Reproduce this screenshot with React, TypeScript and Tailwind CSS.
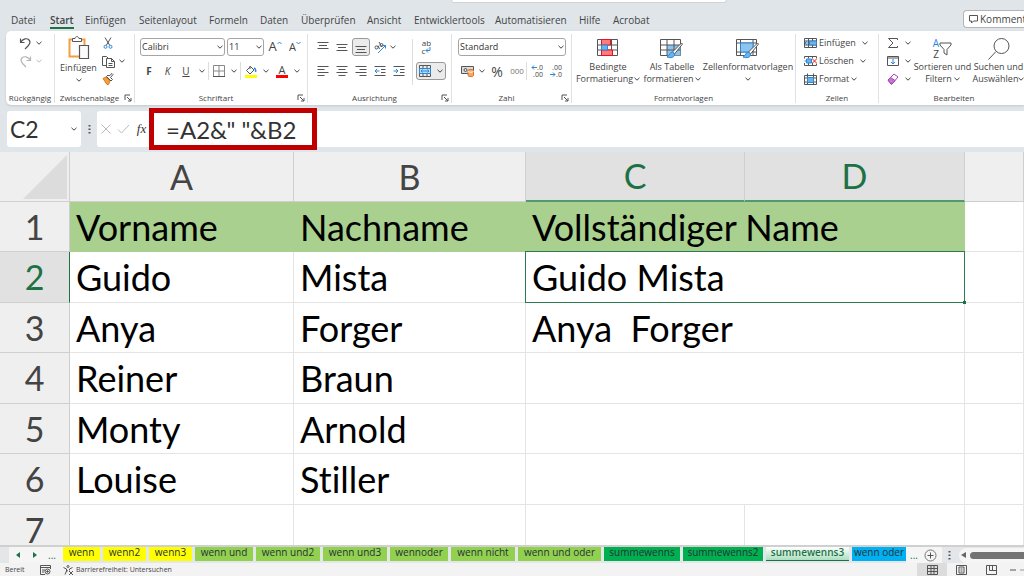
import type { ReactNode } from "react";
import clsx from "clsx";

const MENU = [
  { label: "Datei", width: "w-[39px]" },
  { label: "Start", width: "w-[35px]" },
  { label: "Einfügen", width: "w-[54px]" },
  { label: "Seitenlayout", width: "w-[70px]" },
  { label: "Formeln", width: "w-[51px]" },
  { label: "Daten", width: "w-[41px]" },
  { label: "Überprüfen", width: "w-[66px]" },
  { label: "Ansicht", width: "w-[47px]" },
  { label: "Entwicklertools", width: "w-[81px]" },
  { label: "Automatisieren", width: "w-[84px]" },
  { label: "Hilfe", width: "w-[34px]" },
  { label: "Acrobat", width: "w-[50px]" },
];

const ROWS = [
  { a: "Vorname", b: "Nachname", c: "Vollständiger Name" },
  { a: "Guido", b: "Mista", c: "Guido Mista" },
  { a: "Anya", b: "Forger", c: "Anya  Forger" },
  { a: "Reiner", b: "Braun", c: "" },
  { a: "Monty", b: "Arnold", c: "" },
  { a: "Louise", b: "Stiller", c: "" },
];

const SHEETS = [
  { label: "wenn", style: "w-[37px] bg-[#ffff00]" },
  { label: "wenn2", style: "w-[43px] bg-[#ffff00]" },
  { label: "wenn3", style: "w-[43px] bg-[#ffff00]" },
  { label: "wenn und", style: "w-[58px] bg-[#92d050]" },
  { label: "wenn und2", style: "w-[64px] bg-[#92d050]" },
  { label: "wenn und3", style: "w-[64px] bg-[#92d050]" },
  { label: "wennoder", style: "w-[58px] bg-[#92d050]" },
  { label: "wenn nicht", style: "w-[64px] bg-[#92d050]" },
  { label: "wenn und oder", style: "w-[83px] bg-[#92d050]" },
  { label: "summewenns", style: "w-[76px] bg-[#00b050]" },
  { label: "summewenns2", style: "w-[80px] bg-[#00b050]" },
  {
    label: "summewenns3",
    style:
      "w-[83px] border-b border-[#1e7145] bg-linear-to-b from-white to-[#a9dfc0] font-semibold !text-[#1e7145]",
  },
  { label: "wenn oder", style: "w-[54px] bg-[#00b0f0]" },
];

type IconProps = { w: number; h: number; children: ReactNode };

const Icon = ({ w, h, children }: IconProps) => (
  <svg
    width={w}
    height={h}
    viewBox={`0 0 ${w} ${h}`}
    fill="none"
    stroke="#555"
    strokeWidth="1"
    className="shrink-0"
    aria-hidden="true"
  >
    {children}
  </svg>
);

const Chevron = ({ faded = false }: { faded?: boolean }) => (
  <Icon w={6} h={4}>
    <path d="M.5 .8 3 3.200 5.500 .8" stroke={faded ? "#bbb" : "#444"} />
  </Icon>
);

type ToolProps = {
  label: string;
  className?: string;
  children: ReactNode;
};

const Tool = ({ label, className, children }: ToolProps) => (
  <button
    type="button"
    aria-label={label}
    className={clsx("flex h-[18px] shrink-0 items-center justify-center", className)}
  >
    {children}
  </button>
);

const Launcher = () => (
  <Icon w={8} h={8}>
    <path d="M1 6V1h5M3 3l4 4M7 4v3H4" />
  </Icon>
);

type GroupProps = {
  label: string;
  className: string;
  launcher?: boolean;
  children: ReactNode;
};

const Group = ({ label, className, launcher, children }: GroupProps) => (
  <section
    aria-label={label}
    className={clsx("flex shrink-0 flex-col border-r border-[#e1e1e1]", className)}
  >
    <div className="flex flex-1">{children}</div>
    <div className="flex h-[10px] items-center text-[8px] leading-[10px] text-[#444]">
      <span className="flex-1 text-center whitespace-nowrap">{label}</span>
      {launcher && (
        <button type="button" aria-label={`${label} Optionen`} className="pr-0.5">
          <Launcher />
        </button>
      )}
    </div>
  </section>
);

type DropdownProps = { label: string; value: string; className: string };

const Dropdown = ({ label, value, className }: DropdownProps) => (
  <div className={clsx("relative h-[18px] shrink-0", className)}>
    <select
      aria-label={label}
      className="block h-full w-full appearance-none rounded-[3px] border border-[#a5a5a5] bg-white pl-px text-[9px] text-[#333]"
    >
      <option>{value}</option>
    </select>
    <span className="pointer-events-none absolute inset-y-0 right-0.5 flex items-center">
      <Chevron />
    </span>
  </div>
);

const Lines = ({ d }: { d: string }) => (
  <Icon w={12} h={12}>
    <path d={d} />
  </Icon>
);

const Divider = () => <span className="h-[18px] w-px shrink-0 bg-[#ddd]" />;

const UndoGroup = () => (
  <Group label="Rückgängig" className="w-[49px]">
    <div className="flex flex-col pl-3">
      <div className="flex">
        <Tool label="Rückgängig" className="w-[15px]">
          <Icon w={13} h={13}>
            <path d="M1.5 1.5v4h4M1.5 5.5C4 1.5 8 .8 10 3s1 4-1 6l-3 3" strokeWidth="1.2" />
          </Icon>
        </Tool>
        <Tool label="Rückgängig Liste" className="w-[12px]">
          <Chevron />
        </Tool>
      </div>
      <div className="flex">
        <Tool label="Wiederholen" className="w-[15px]">
          <Icon w={13} h={13}>
            <path
              d="M11.5 1.5v4h-4M11.5 5.5C9 1.5 5 .8 3 3s-1 4 1 6l3 3"
              stroke="#b5b5b5"
              strokeWidth="1.2"
            />
          </Icon>
        </Tool>
        <Tool label="Wiederholen Liste" className="w-[12px]">
          <Chevron faded />
        </Tool>
      </div>
    </div>
  </Group>
);

const ClipboardGroup = () => (
  <Group label="Zwischenablage" className="w-[80px]" launcher>
    <button
      type="button"
      className="flex w-[47px] flex-col items-center pt-0.5 text-[9px] leading-[12px]"
    >
      <Icon w={22} h={24}>
        <path d="M1.5 3.5h15v17h-15z" stroke="#f0a040" strokeWidth="2" />
        <path d="M3 5h12v14H3z" fill="#fff" stroke="none" />
        <path d="M4.500 5.500v-3h2.500c.5-2.500 3.500-2.500 4 0h2.500v3z" fill="#fff" />
        <path d="M11.500 9.500h9v13h-9z" fill="#fafafa" strokeWidth="1.200" />
      </Icon>
      <span className="mt-0.5">Einfügen</span>
      <span className="flex h-3 items-center">
        <Chevron />
      </span>
    </button>
    <div className="flex flex-col">
      <Tool label="Ausschneiden" className="w-[12px]">
        <Icon w={10} h={12}>
          <path d="M2 .5 6.800 8.500M8 .5 3.200 8.500" />
          <circle cx="2.500" cy="9.800" r="1.500" stroke="#2b88d8" />
          <circle cx="7.500" cy="9.800" r="1.500" stroke="#2b88d8" />
        </Icon>
      </Tool>
      <div className="flex">
        <Tool label="Kopieren" className="w-[13px]">
          <Icon w={13} h={13}>
            <path d="M4.500 10.500h-4V1.500h4l1.500 1.500" />
            <path d="M4.500 3.500h5l3 3v6h-8zM9.500 3.500v3h3M6.500 8.500h4M6.500 10.500h4" />
          </Icon>
        </Tool>
        <Tool label="Kopieren Liste" className="w-[13px]">
          <Chevron />
        </Tool>
      </div>
      <Tool label="Format übertragen" className="w-[12px]">
        <Icon w={12} h={12}>
          <path d="M1 5.500 4 4l4 4-1.500 3.500H5z" fill="#f0a040" stroke="#d97a1c" />
          <path d="m4.500 3.500 4.500 4.500 1.500-1.500-2-2 2.500-3-1-1-3 2.500-1-1z" fill="#fff" />
        </Icon>
      </Tool>
    </div>
  </Group>
);

const FontGroup = () => (
  <Group label="Schriftart" className="w-[173px]" launcher>
    <div className="flex flex-col gap-1.5 pt-1 pl-[5px]">
      <div className="flex gap-0.5">
        <Dropdown label="Schriftart" value="Calibri" className="w-[85px]" />
        <Dropdown label="Schriftgrad" value="11" className="w-[37px]" />
        <Tool label="Schriftgrad vergrößern" className="w-[18px] text-[13px]">
          A
          <span className="self-start pt-0.5">
            <Icon w={5} h={5}>
              <path d="m.5 4 2-2 2 2" stroke="#2b88d8" />
            </Icon>
          </span>
        </Tool>
        <Tool label="Schriftgrad verkleinern" className="w-[18px] text-[11px]">
          A
          <span className="self-start pt-0.5">
            <Icon w={5} h={5}>
              <path d="m.5 2 2 2 2-2" stroke="#2b88d8" />
            </Icon>
          </span>
        </Tool>
      </div>
      <div className="flex text-[10px]">
        <Tool label="Fett" className="w-[18px] font-bold">F</Tool>
        <Tool label="Kursiv" className="w-[19px] italic">K</Tool>
        <Tool label="Unterstrichen" className="w-[18px] underline">U</Tool>
        <Tool label="Unterstrichen Liste" className="w-[13px]"><Chevron /></Tool>
        <Divider />
        <Tool label="Rahmen" className="w-[19px]">
          <Icon w={12} h={12}>
            <path d="M.5.500h11v11H.500zM6 .500v11M.500 6h11" stroke="#888" />
            <path d="M0 11.500h12" />
          </Icon>
        </Tool>
        <Tool label="Rahmen Liste" className="w-[12px]"><Chevron /></Tool>
        <Divider />
        <Tool label="Füllfarbe" className="w-[20px]">
          <Icon w={12} h={13}>
            <path d="M5 1v3M5.500 1.500 9 5 5 9 1.500 5.500z" />
            <path d="M9 3c1.500.5 2 2 1.500 4" stroke="#2b88d8" strokeWidth="1.500" />
            <path d="M0 10h12v3H0z" fill="#ff0" stroke="none" />
          </Icon>
        </Tool>
        <Tool label="Füllfarbe Liste" className="w-[10px]"><Chevron /></Tool>
        <Tool label="Schriftfarbe" className="w-[22px]">
          <span className="flex w-3 flex-col items-center border-b-[3px] border-[#f00] text-[11px] leading-[10px]">
            A
          </span>
        </Tool>
        <Tool label="Schriftfarbe Liste" className="w-[8px]"><Chevron /></Tool>
      </div>
    </div>
  </Group>
);

const AlignmentGroup = () => (
  <Group label="Ausrichtung" className="w-[144px]" launcher>
    <div className="flex flex-col gap-1.5 pt-1 pl-[5px]">
      <div className="flex">
        <Tool label="Oben ausrichten" className="w-[19px]">
          <Lines d="M.500 1.500h11M2 4.500h8M.500 7.500h11" />
        </Tool>
        <Tool label="Zentriert ausrichten" className="w-[20px]">
          <Lines d="M.500 3.500h11M2 6.500h8M.500 9.500h11" />
        </Tool>
        <Tool label="Unten ausrichten" className="w-[18px] rounded-[3px] border border-[#999] bg-[#ebebeb]">
          <Lines d="M.500 5.500h11M2 8.500h8M.500 11.500h11" />
        </Tool>
        <Tool label="Ausrichtung" className="w-[20px]">
          <Icon w={13} h={13}>
            <circle cx="2.500" cy="6.500" r="1.500" />
            <path d="M4 4.500 5.500 8M5 1l3 5" />
            <circle cx="7.500" cy="4" r="1.500" />
            <path d="M4 12 11.500 4.500M8.500 4.500h3v3" stroke="#2b88d8" />
          </Icon>
        </Tool>
        <Tool label="Ausrichtung Liste" className="w-[6px]"><Chevron /></Tool>
      </div>
      <div className="flex">
        <Tool label="Linksbündig" className="w-[19px]">
          <Lines d="M.500 1.500h11M.500 4.500h7M.500 7.500h11M.500 10.500h7" />
        </Tool>
        <Tool label="Zentriert" className="w-[19px]">
          <Lines d="M.500 1.500h11M2.500 4.500h7M.500 7.500h11M2.500 10.500h7" />
        </Tool>
        <Tool label="Rechtsbündig" className="w-[19px]">
          <Lines d="M.500 1.500h11M4.500 4.500h7M.500 7.500h11M4.500 10.500h7" />
        </Tool>
        <Tool label="Einzug verkleinern" className="w-[19px]">
          <Icon w={12} h={12}>
            <path d="M.500 1.500h11M7 4.500h4.500M7 7.500h4.500M.500 10.500h11" />
            <path d="M1 6h4.500M3 4 1 6l2 2" stroke="#2b88d8" />
          </Icon>
        </Tool>
        <Tool label="Einzug vergrößern" className="w-[19px]">
          <Icon w={12} h={12}>
            <path d="M.500 1.500h11M7 4.500h4.500M7 7.500h4.500M.500 10.500h11" />
            <path d="M.500 6H5M3 4l2 2-2 2" stroke="#2b88d8" />
          </Icon>
        </Tool>
      </div>
    </div>
    <div className="mt-[5px] ml-1 h-[46px] w-px bg-[#ddd]" />
    <div className="flex flex-col gap-1.5 pt-1 pl-[3px]">
      <Tool label="Textumbruch" className="w-[21px]">
        <span className="flex flex-col text-[8px] leading-[8px]">
          <span>ab</span>
          <span className="flex">
            c
            <Icon w={6} h={7}>
              <path d="M5 0v3.500H1M3 1.500l-2 2 2 2" stroke="#2b88d8" />
            </Icon>
          </span>
        </span>
      </Tool>
      <Tool label="Verbinden und zentrieren" className="w-[30px] gap-1.5 rounded-[3px] border border-[#999] bg-[#ebebeb]">
        <Icon w={12} h={12}>
          <path d="M.500.500h11v11H.500zM4 .500v3M8 .500v3M4 8.500v3M8 8.500v3" />
          <path d="M.500 3.500h11v5H.500z" fill="#b9dcf5" stroke="#2b88d8" />
          <path d="M2 6h8M3.500 4.500 2 6l1.500 1.500M8.500 4.500 10 6 8.500 7.500" stroke="#2b88d8" />
        </Icon>
        <Chevron />
      </Tool>
    </div>
  </Group>
);

const NumberGroup = () => (
  <Group label="Zahl" className="w-[120px]" launcher>
    <div className="flex flex-col gap-1.5 pt-1 pl-[6px]">
      <Dropdown label="Zahlenformat" value="Standard" className="w-[108px]" />
      <div className="flex">
        <Tool label="Buchhaltungsformat" className="w-[19px]">
          <Icon w={13} h={12}>
            <path d="M.500 1.500h12v7H.500z" fill="#ddd" />
            <circle cx="4.500" cy="5" r="1.500" />
            <path d="M7 5.500c0-1.500 5.500-1.500 5.500 0v5c0 1.500-5.500 1.500-5.500 0z" fill="#f3a869" stroke="#d9731c" />
            <path d="M7 6.500c1 1 4.500 1 5.500 0" stroke="#fff" />
          </Icon>
        </Tool>
        <Tool label="Buchhaltungsformat Liste" className="w-[9px]"><Chevron /></Tool>
        <Tool label="Prozentformat" className="w-[22px] text-[14px]">%</Tool>
        <Tool label="1000er-Trennzeichen" className="w-[18px] text-[8px] text-[#777]">000</Tool>
        <Divider />
        <Tool label="Dezimalstelle hinzufügen" className="w-[20px]">
          <span className="flex flex-col items-end text-[7px] leading-[7px]">
            <span className="flex items-center">
              <Icon w={6} h={5}>
                <path d="M6 2.500H1M3 .500l-2 2 2 2" stroke="#2b88d8" />
              </Icon>
              .0
            </span>
            <span>.00</span>
          </span>
        </Tool>
        <Tool label="Dezimalstelle entfernen" className="w-[18px]">
          <span className="flex flex-col items-end text-[7px] leading-[7px]">
            <span>.00</span>
            <span className="flex items-center">
              <Icon w={6} h={5}>
                <path d="M0 2.500h5M3 .500l2 2-2 2" stroke="#2b88d8" />
              </Icon>
              .0
            </span>
          </span>
        </Tool>
      </div>
    </div>
  </Group>
);

const Brush = () => (
  <>
    <path d="m21.500 5-9 9 2 2 8-10z" fill="#fff" />
    <path d="M12.500 14c-3 0-2.500 3.500-5.500 5 3.500 1.500 8 .5 7.500-3z" fill="#6db3ea" stroke="#2b88d8" />
  </>
);

const StylesGroup = () => (
  <Group label="Formatvorlagen" className="w-[224px]">
    <button type="button" className="ml-1 flex w-[64px] flex-col items-center pt-1 text-[9px] leading-[12px]">
      <Icon w={22} h={22}>
        <path d="M.500 1.500h20v16H.500zM.500 7h20M.500 12h20M4.500 1.500v16M14.500 1.500v16" />
        <path d="M4.500 1.500h9V7h-9zM4.500 12h11v5.500h-11z" fill="#ff7b7b" stroke="#e81123" />
        <path d="M4.500 7h6v5h-6z" fill="#6db3ea" stroke="#2b88d8" />
      </Icon>
      <span className="mt-px">Bedingte</span>
      <span className="flex items-center gap-px whitespace-nowrap">Formatierung <Chevron /></span>
    </button>
    <button type="button" className="flex w-[64px] flex-col items-center pt-1 text-[9px] leading-[12px]">
      <Icon w={24} h={22}>
        <path d="M.500 1.500h20v16H.500z" fill="#fff" />
        <path d="M7 7h13.500v10.500H7z" fill="#8cc6f0" stroke="none" />
        <path d="M.500 7h20M.500 12h20M7 1.500v16M14 1.500v16" />
        <Brush />
      </Icon>
      <span className="mt-px">Als Tabelle</span>
      <span className="flex items-center gap-px whitespace-nowrap">formatieren <Chevron /></span>
    </button>
    <button type="button" className="flex w-[88px] flex-col items-center pt-1 text-[9px] leading-[12px]">
      <Icon w={24} h={22}>
        <path d="M.500 1.500h20v16H.500zM.500 5h20M.500 14h20M4.500 1.500v16M17 1.500v16" />
        <path d="M4.500 5H17v9H4.500z" fill="#8cc6f0" stroke="#2b88d8" />
        <Brush />
      </Icon>
      <span className="mt-px">Zellenformatvorlagen</span>
      <span className="flex h-3 items-center"><Chevron /></span>
    </button>
  </Group>
);

const CellsGroup = () => (
  <Group label="Zellen" className="w-[83px]">
    <div className="flex flex-col pl-[8px] text-[9px]">
      <Tool label="Zellen einfügen" className="gap-0.5 !justify-start">
        <Icon w={13} h={12}>
          <path d="M.500 1.500h12v9H.500zM.500 4h12M.500 8h12M4.500 1.500v9M8.500 1.500v9" />
          <path d="M5.500 4h7v4h-7z" fill="#6db3ea" stroke="#2b88d8" />
          <path d="M6 6H1M3 4 1 6l2 2" stroke="#2b88d8" />
        </Icon>
        Einfügen
        <span className="pl-1"><Chevron /></span>
      </Tool>
      <Tool label="Zellen löschen" className="gap-0.5 !justify-start">
        <Icon w={13} h={12}>
          <path d="M.500 3.500v-2h12v2M4.500 1.500v2M8.500 1.500v2M.500 8v2.500h12v-2M4.500 8v2.500M8.500 8v2.500" />
          <path d="M.500 6h2M2.500 4h5v4h-5z" fill="#6db3ea" stroke="#2b88d8" />
          <path d="m8.500 4 4 4M12.500 4l-4 4" stroke="#e81123" />
        </Icon>
        Löschen
        <span className="pl-1"><Chevron /></span>
      </Tool>
      <Tool label="Zellen formatieren" className="gap-0.5 !justify-start">
        <Icon w={13} h={12}>
          <path d="M.500 2.500h12v9H.500zM3.500.500v11M9.500.500v11M.500 5h12M.500 9h12" />
          <path d="M3.500 4.500h6v5h-6z" fill="#6db3ea" stroke="#2b88d8" />
        </Icon>
        Format
        <Chevron />
      </Tool>
    </div>
  </Group>
);

const EditGroup = () => (
  <Group label="Bearbeiten" className="w-[150px] border-r-0">
    <div className="flex flex-col pl-[8px]">
      <Tool label="Summe" className="gap-1.5">
        <Icon w={12} h={12}>
          <path d="M10.500 3V1.500h-9L6 6l-4.500 4.500h9V9" />
        </Icon>
        <Chevron />
      </Tool>
      <Tool label="Ausfüllen" className="gap-1.5">
        <Icon w={12} h={12}>
          <path d="M.500 1.500h11v9H.500zM.500 3h11" />
          <path d="M6 4v5M4 7l2 2 2-2" stroke="#2b88d8" />
        </Icon>
        <Chevron />
      </Tool>
      <Tool label="Löschen" className="gap-1.5">
        <Icon w={12} h={12}>
          <path d="M1 7 7 1l4 3-6 7H4z" stroke="#a33fb5" />
          <path d="m1 7 2.500-2.500L8 7.500l-3 3.500H4z" fill="#c878d4" stroke="#a33fb5" />
        </Icon>
        <Chevron />
      </Tool>
    </div>
    <button type="button" className="ml-0.5 flex w-[59px] flex-col items-center pt-1 text-[9px] leading-[12px]">
      <span className="flex h-[22px] items-center">
        <span className="flex flex-col text-[10px] leading-[11px]">
          <span className="text-[#2b88d8]">A</span>
          <span>Z</span>
        </span>
        <Icon w={13} h={14}>
          <path d="M1 1h11v2L8 7.500V13L5 11V7.500L1 3z" />
        </Icon>
      </span>
      <span className="mt-px whitespace-nowrap">Sortieren und</span>
      <span className="flex items-center gap-0.5">Filtern <Chevron /></span>
    </button>
    <button type="button" className="flex w-[53px] flex-col items-center pt-1 text-[9px] leading-[12px]">
      <Icon w={22} h={22}>
        <circle cx="13.500" cy="8" r="7.500" />
        <path d="m8 13.500-7.500 8" />
      </Icon>
      <span className="mt-px whitespace-nowrap">Suchen und</span>
      <span className="flex items-center">Auswählen <Chevron /></span>
    </button>
  </Group>
);

const FormulaBar = () => (
  <div className="mt-1.5 mb-[5px] flex h-9 shrink-0 pl-[7px] font-['Lato',sans-serif] text-[23px] text-[#333]">
    <div className="flex w-[74px] items-center rounded-[3px] bg-white pr-1">
      <input
        aria-label="Namenfeld"
        defaultValue="C2"
        className="w-full min-w-0 bg-transparent pl-[3px] outline-none"
      />
      <Chevron />
    </div>
    <div className="flex w-4 items-center justify-center">
      <Icon w={3} h={11}>
        <path d="M1.500 1v1.500M1.500 4.500V6M1.500 8v1.500" strokeWidth="2" />
      </Icon>
    </div>
    <div className="flex flex-1 items-center rounded-l-[3px] bg-white pl-1">
      <Tool label="Abbrechen" className="w-[10px]">
        <Icon w={10} h={10}>
          <path d="m.500.500 9 9M9.500.500l-9 9" stroke="#bbb" />
        </Icon>
      </Tool>
      <Tool label="Eingeben" className="ml-1.5 w-[13px]">
        <Icon w={13} h={10}>
          <path d="m1 5.500 3.500 3.500L12 1" stroke="#bbb" />
        </Icon>
      </Tool>
      <Tool
        label="Funktion einfügen"
        className="ml-[5px] w-[13px] font-['Liberation_Serif',serif] text-[13px] italic"
      >
        fx
      </Tool>
      <div className="ml-px h-[42px] w-[168px] border-[5px] border-[#c00000]">
        <input
          aria-label="Bearbeitungsleiste"
          defaultValue={'=A2&" "&B2'}
          className="h-full w-full bg-transparent pl-3 text-[24px] outline-none"
        />
      </div>
    </div>
  </div>
);

const cell = "border-r border-b border-[#e4e4e4] p-0 pl-1.5 text-left font-normal whitespace-pre";
const headCell = "border-r border-b border-[#cfcfcf] p-0 text-center font-normal";

const Sheet = () => (
  <div className="min-h-0 flex-1 overflow-hidden bg-white">
    <table className="w-full table-fixed border-separate border-spacing-0 font-['Lato',sans-serif] text-[36px] leading-[40px] text-black [font-variant-ligatures:none]">
      <colgroup>
        <col className="w-[70px]" />
        <col className="w-[224px]" />
        <col className="w-[232px]" />
        <col className="w-[219px]" />
        <col className="w-[220px]" />
        <col />
      </colgroup>
      <thead>
        <tr className="h-[50px] bg-[#efefef] text-[34px] text-[#444]">
          <td className={headCell}>
            <svg width="68" height="46" viewBox="0 0 68 46" aria-hidden="true">
              <path d="M67 1v44H23z" fill="#dcdcdc" />
            </svg>
          </td>
          <th className={headCell}>A</th>
          <th className={headCell}>B</th>
          <th className={clsx(headCell, "!border-b-[#4f9a70] border-b-2 bg-[#e1e1e1] text-[#1e7145]")}>C</th>
          <th className={clsx(headCell, "!border-b-[#4f9a70] border-b-2 bg-[#e1e1e1] text-[#1e7145]")}>D</th>
          <th className={headCell} />
        </tr>
      </thead>
      <tbody>
        {ROWS.map((row, i) => {
          const selected = i === 1;
          const title = i === 0 && "!border-[#a9d08e] bg-[#a9d08e]";
          return (
            <tr key={row.a} className="h-[51px] odd:h-[50px]">
              <th
                className={clsx(
                  headCell,
                  "text-[34px]",
                  selected ? "!border-r-[#1e7145] bg-[#e1e1e1] text-[#1e7145]" : "bg-[#efefef] text-[#444]"
                )}
              >
                {i + 1}
              </th>
              <td className={clsx(cell, title)}>{row.a}</td>
              <td className={clsx(cell, title)}>{row.b}</td>
              <td colSpan={2} className={clsx(cell, title, selected && "relative")}>
                {row.c}
                {selected && (
                  <span className="absolute -inset-px border border-[#2a7a52]">
                    <span className="absolute -right-0.5 -bottom-0.5 size-[3px] bg-[#1e7145]" />
                  </span>
                )}
              </td>
              <td className={cell} />
            </tr>
          );
        })}
        <tr className="h-[50px]">
          <th className={clsx(headCell, "bg-[#efefef] text-[34px] text-[#444]")}>7</th>
          <td className={cell} />
          <td className={cell} />
          <td className={cell} />
          <td className={cell} />
          <td className={cell} />
        </tr>
      </tbody>
    </table>
  </div>
);

const SheetTabs = () => (
  <nav
    aria-label="Tabellenblätter"
    className="flex h-[18px] shrink-0 items-start border-t-2 border-[#d0d0d0] bg-[#e3e7ea] pl-[9px]"
  >
    <div className="flex h-4 w-[54px] shrink-0 items-center bg-[#f5f5f5] pl-1.5 text-[#1e7145]">
      <Tool label="Vorheriges Blatt" className="w-[6px]">
        <Icon w={4} h={6}>
          <path d="M4 0v6L0 3z" fill="#1e7145" stroke="none" />
        </Icon>
      </Tool>
      <Tool label="Nächstes Blatt" className="ml-[11px] w-[6px]">
        <Icon w={4} h={6}>
          <path d="M0 0v6l4-3z" fill="#1e7145" stroke="none" />
        </Icon>
      </Tool>
      <span className="ml-2.5 text-[10px] leading-3">...</span>
    </div>
    <div className="flex gap-[3px]">
      {SHEETS.map((sheet) => (
        <button
          key={sheet.label}
          type="button"
          className={clsx(
            "flex h-[14px] shrink-0 items-start justify-center text-[10px] leading-[11px] whitespace-nowrap text-[#263238]",
            sheet.style
          )}
        >
          {sheet.label}
        </button>
      ))}
    </div>
    <div className="flex h-4 w-[36px] shrink-0 items-center gap-1.5 bg-[#f5f5f5] pl-1 text-[10px] leading-3 text-[#1e7145]">
      ...
      <Tool label="Neues Blatt" className="w-[13px]">
        <Icon w={13} h={13}>
          <circle cx="6.500" cy="6.500" r="5.500" stroke="#777" />
          <path d="M6.500 3.500v6M3.500 6.500h6" />
        </Icon>
      </Tool>
    </div>
    <div className="flex h-4 min-w-0 flex-1 items-center gap-2 pl-1.5">
      <Icon w={3} h={10}>
        <path d="M1.500 1v1.500M1.500 4.500V6M1.500 8v1.500" strokeWidth="2" />
      </Icon>
      <div className="flex min-w-0 flex-1 items-center gap-1 rounded-l-full bg-[#f5f5f5] py-1 pl-0.5">
        <Icon w={5} h={6}>
          <path d="M5 0v6L0 3z" fill="#666" stroke="none" />
        </Icon>
        <span className="h-[7px] flex-1 rounded-l-full bg-[#737373]" />
      </div>
    </div>
  </nav>
);

const StatusBar = () => (
  <footer className="flex h-[13px] shrink-0 items-center overflow-hidden bg-[#f3f3f3] pl-[5px] text-[7px] leading-[10px] text-[#444]">
    <span className="w-[35px]">Bereit</span>
    <Icon w={11} h={10}>
      <path d="M10.500 4V.500H.500v9H5M.500 2.500h10M2 5h3M2 7h2" />
      <circle cx="7.500" cy="6.500" r="2.500" />
      <circle cx="7.500" cy="6.500" r=".8" fill="#444" />
    </Icon>
    <span className="ml-3 flex flex-1 items-center gap-0.5">
      <Icon w={11} h={10}>
        <circle cx="5" cy="1.500" r="1" />
        <path d="M.500 2.500 3.500 4v2L2 9.500M9.500 2.500l-3 1.500v1.500M3.500 6.500 5 5.500M6 6l4 4M10 6l-4 4" />
      </Icon>
      Barrierefreiheit: Untersuchen
    </span>
    <button type="button" aria-label="Normal" className="flex h-full w-[30px] items-center justify-center bg-[#dcdcdc]">
      <Icon w={11} h={10}>
        <path d="M.500.500h10v9H.500zM.500 3.500h10M.500 6.500h10M4 .500v9M7 .500v9" />
      </Icon>
    </button>
    <button type="button" aria-label="Seitenlayout" className="flex w-[29px] justify-center">
      <Icon w={11} h={10}>
        <path d="M.500.500h10v9H.500zM3 2h5v6H3zM4.500 4h2M4.500 6h2" />
      </Icon>
    </button>
    <button type="button" aria-label="Umbruchvorschau" className="flex w-[30px] justify-center">
      <Icon w={11} h={10}>
        <path d="M.500.500h10v9H.500zM3.500.500v5h7M6.500.500v5" />
      </Icon>
    </button>
    <button type="button" aria-label="Verkleinern" className="flex w-[18px] justify-between pl-1">
      <Icon w={6} h={2}>
        <path d="M0 1h6" />
      </Icon>
      <Icon w={4} h={2}>
        <path d="M0 1h4" stroke="#999" />
      </Icon>
    </button>
  </footer>
);

export default function App() {
  return (
    <div className="flex h-screen flex-col overflow-hidden bg-[#e0e5e9] font-['Open_Sans',sans-serif] text-[#444]">
      <header className="relative flex h-[31px] shrink-0 items-end pl-[11px]">
        <span className="absolute top-0 left-[44%] h-[3px] w-[27%] rounded-b border border-t-0 border-[#d0d4d8] bg-white" />
        <nav aria-label="Menüband" className="flex flex-1 pb-0.5 text-[10px] leading-[14px]">
          {MENU.map(({ label, width }) => (
            <div key={label} className={clsx("flex shrink-0", width)}>
              <a
                href="#"
                className={clsx(
                  "border-b-2 whitespace-nowrap",
                  label === "Start" ? "border-[#1e7145] font-semibold" : "border-transparent"
                )}
              >
                {label}
              </a>
            </div>
          ))}
        </nav>
        <button
          type="button"
          className="mb-[3px] flex h-[18px] w-[61px] items-center gap-0.5 overflow-hidden rounded-l-[4px] border border-r-0 border-[#b5b5b5] bg-white pl-[5px] text-[10px] font-medium"
        >
          <Icon w={9} h={9}>
            <path d="M.500.500h8v5.500h-4L2.500 8V6h-2z" />
          </Icon>
          Komment
        </button>
      </header>

      <div
        aria-label="Start"
        className="ml-1.5 flex h-[74px] shrink-0 overflow-hidden rounded-l-[5px] bg-white pt-[3px] pb-0.5 shadow-sm"
      >
        <UndoGroup />
        <ClipboardGroup />
        <FontGroup />
        <AlignmentGroup />
        <NumberGroup />
        <StylesGroup />
        <CellsGroup />
        <EditGroup />
      </div>

      <FormulaBar />
      <Sheet />
      <SheetTabs />
      <StatusBar />
    </div>
  );
}
